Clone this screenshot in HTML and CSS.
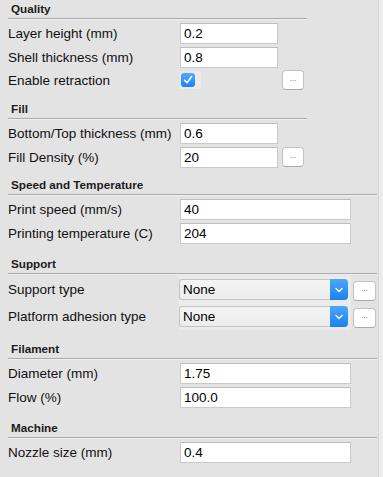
FILE: index.html
```html
<!DOCTYPE html>
<html lang="en">
<head>
    <meta charset="UTF-8">
    <meta name="viewport" content="width=device-width, initial-scale=1.0">
    <title>Basic settings</title>
    <link rel="stylesheet" href="styles.css">
</head>
<body>
    <div class="panel">

        <section class="group narrow quality">
            <h2 class="group-title">Quality</h2>
            <div class="rows">
                <div class="row">
                    <label>Layer height (mm)</label>
                    <input class="field" type="text" value="0.2">
                </div>
                <div class="row">
                    <label>Shell thickness (mm)</label>
                    <input class="field" type="text" value="0.8">
                </div>
                <div class="row check-row">
                    <label>Enable retraction</label>
                    <span class="check-wrap">
                        <span class="check">
                            <svg width="10" height="10" viewBox="0 0 10 10"><polyline points="1.5,5.2 4,7.8 8.6,1.6" fill="none" stroke="#fff" stroke-width="1.6" stroke-linecap="round" stroke-linejoin="round"/></svg>
                        </span>
                    </span>
                    <button class="more">...</button>
                </div>
            </div>
        </section>

        <section class="group narrow fill">
            <h2 class="group-title">Fill</h2>
            <div class="rows">
                <div class="row">
                    <label>Bottom/Top thickness (mm)</label>
                    <input class="field" type="text" value="0.6">
                </div>
                <div class="row">
                    <label>Fill Density (%)</label>
                    <input class="field" type="text" value="20">
                    <button class="more">...</button>
                </div>
            </div>
        </section>

        <section class="group">
            <h2 class="group-title">Speed and Temperature</h2>
            <div class="rows">
                <div class="row">
                    <label>Print speed (mm/s)</label>
                    <input class="field" type="text" value="40">
                </div>
                <div class="row">
                    <label>Printing temperature (C)</label>
                    <input class="field" type="text" value="204">
                </div>
            </div>
        </section>

        <section class="group">
            <h2 class="group-title">Support</h2>
            <div class="rows">
                <div class="row select-row">
                    <label>Support type</label>
                    <span class="select-wrap">
                        <span class="select">
                            <span class="select-value">None</span>
                            <span class="select-arrow">
                                <svg width="8" height="6" viewBox="0 0 8 6"><polyline points="1,1.5 4,4.5 7,1.5" fill="none" stroke="#fff" stroke-width="1.4" stroke-linecap="round" stroke-linejoin="round"/></svg>
                            </span>
                        </span>
                    </span>
                    <button class="more">...</button>
                </div>
                <div class="row select-row">
                    <label>Platform adhesion type</label>
                    <span class="select-wrap">
                        <span class="select">
                            <span class="select-value">None</span>
                            <span class="select-arrow">
                                <svg width="8" height="6" viewBox="0 0 8 6"><polyline points="1,1.5 4,4.5 7,1.5" fill="none" stroke="#fff" stroke-width="1.4" stroke-linecap="round" stroke-linejoin="round"/></svg>
                            </span>
                        </span>
                    </span>
                    <button class="more">...</button>
                </div>
            </div>
        </section>

        <section class="group">
            <h2 class="group-title">Filament</h2>
            <div class="rows">
                <div class="row">
                    <label>Diameter (mm)</label>
                    <input class="field" type="text" value="1.75">
                </div>
                <div class="row">
                    <label>Flow (%)</label>
                    <input class="field" type="text" value="100.0">
                </div>
            </div>
        </section>

        <section class="group">
            <h2 class="group-title">Machine</h2>
            <div class="rows">
                <div class="row">
                    <label>Nozzle size (mm)</label>
                    <input class="field" type="text" value="0.4">
                </div>
            </div>
        </section>

    </div>
</body>
</html>
```

FILE: styles.css
```css
html, body {
    margin: 0;
    padding: 0;
    background-color: #ececec;
}

body {
    font-family: "Liberation Sans", Arial, sans-serif;
    color: #111;
}

.panel {
    width: 379px;
    min-height: 477px;
    box-sizing: border-box;
    padding-left: 8px;
    background-color: #e3e3e3;
    border-right: 1px solid #d6d6d6;
}

.group {
    width: 369px;
    padding-bottom: 10px;
}

.group.narrow {
    width: 299px;
}

.group.quality {
    padding-bottom: 9px;
}

.group.fill {
    padding-bottom: 7px;
}

.group-title {
    margin: 0;
    height: 19px;
    box-sizing: border-box;
    padding: 2px 0 0 3px;
    font-size: 11.7px;
    line-height: 14px;
    font-weight: bold;
    color: #1c1c1c;
    border-bottom: 1px solid #aaaaaa;
    box-shadow: 0 1px 0 #efefef;
}

.rows {
    padding-top: 2px;
}

.row {
    display: grid;
    grid-template-columns: 168px 171px;
    column-gap: 4px;
    align-items: center;
    height: 24px;
    font-size: 13.5px;
}

.narrow .row {
    grid-template-columns: 168px 98px 22px;
}

.row label {
    white-space: nowrap;
}

.field {
    height: 21px;
    box-sizing: border-box;
    margin: 0;
    padding: 0 3px;
    border: 1px solid #c9c9c9;
    border-top-color: #bdbdbd;
    background-color: #fff;
    font-family: inherit;
    font-size: 13.5px;
    color: #000;
    outline: none;
}

.more {
    width: 22px;
    height: 20px;
    margin: 0;
    padding: 0 0 3px;
    box-sizing: border-box;
    background-color: #fff;
    border: 1px solid #c2c2c2;
    border-bottom-color: #a9a9a9;
    border-radius: 4px;
    font-family: inherit;
    font-size: 8px;
    line-height: 1;
    color: #6a4a40;
    cursor: pointer;
}

.check-row {
    height: 22px;
}

.check-wrap {
    justify-self: start;
    margin-left: -1px;
    width: 22px;
    height: 18px;
    box-sizing: border-box;
    padding: 2px;
    background-color: #ebebeb;
}

.check {
    display: flex;
    align-items: center;
    justify-content: center;
    width: 14px;
    height: 14px;
    border-radius: 3px;
    background: linear-gradient(#55a9fb, #1c83f4);
}

.select-row {
    height: 27px;
    grid-template-columns: 170px 171px 23px;
    column-gap: 2px;
}

.select-wrap {
    margin-left: -1px;
    height: 27px;
    box-sizing: border-box;
    padding: 3px 3px 3px 0;
    background-color: #ebebeb;
}

.select {
    display: flex;
    height: 21px;
    box-sizing: border-box;
    border: 1px solid #c4c4c4;
    border-right: none;
    border-radius: 3px;
    background: linear-gradient(#f4f4f4, #ececec);
}

.select-value {
    flex: 1;
    padding-left: 3px;
    line-height: 19px;
    font-size: 13.5px;
    color: #000;
}

.select-arrow {
    display: flex;
    align-items: center;
    justify-content: center;
    width: 18px;
    margin: -1px 0;
    border-radius: 0 4px 4px 0;
    background: linear-gradient(#4ea6fb, #1a80f3);
}

.select-row .more {
    width: 23px;
    margin-top: 2px;
}
```
